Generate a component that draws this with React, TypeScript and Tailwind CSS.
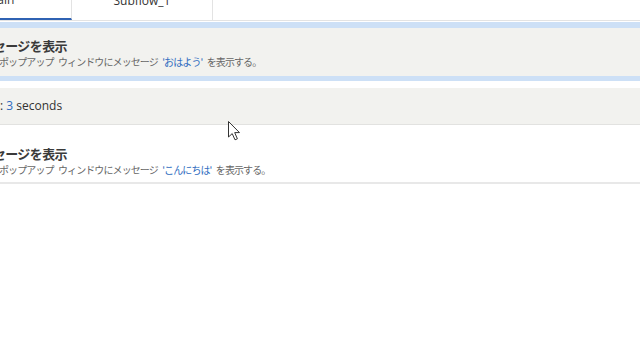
import React from "react";

const jp = { fontFamily: '"Noto Sans CJK JP", "Noto Sans", sans-serif' };
const lat = { fontFamily: '"Open Sans", "Noto Sans CJK JP", sans-serif' };

function Cursor() {
  return (
    <svg
      className="absolute left-[228px] top-[121px]"
      width="13"
      height="20"
      viewBox="0 0 13 20"
    >
      <path
        d="M0.5 0.5 L0.5 16 L4.2 12.6 L7 18.8 L9.4 17.8 L6.7 11.6 L11.5 11.6 Z"
        fill="#ffffff"
        stroke="#333333"
        strokeWidth="1"
        strokeLinejoin="round"
      />
    </svg>
  );
}

function Sub({ word }: { word: string }) {
  return (
    <div
      className="-ml-[1px] text-[10px] leading-[16px] text-[#666] tracking-[-0.9px] [word-spacing:3px] whitespace-nowrap"
      style={jp}
    >
      ポップアップ ウィンドウにメッセージ <span className="text-[#2f6cc0]">'{word}'</span> を表示する。
    </div>
  );
}

function Title() {
  return (
    <div
      className="-ml-[32px] text-[13px] leading-[17px] font-bold text-[#3a3a3a] tracking-[-0.6px]"
      style={jp}
    >
      メッセージを表示
    </div>
  );
}

export default function App() {
  return (
    <div className="relative w-[640px] h-[360px] overflow-hidden bg-white">
      {/* Tabs */}
      <div className="flex h-[39px] -mt-[18px] border-b border-[#e3e3e3]">
        <div className="-ml-[70px] w-[142px] flex items-center justify-center border-b-2 border-[#2f62b3] border-r border-r-[#e3e3e3]">
          <span className="text-[12px] text-[#333]" style={lat}>Main</span>
        </div>
        <div className="w-[141px] flex items-center justify-center border-r border-[#e3e3e3]">
          <span className="text-[12px] text-[#333]" style={lat}>Subflow_1</span>
        </div>
      </div>

      {/* Selected action */}
      <div className="mt-[1px] h-[59px] border-t-[6px] border-b-[5px] border-[#cde0f6] bg-[#f2f2ef] flex flex-col pt-[9px]">
        <Title />
        <Sub word="おはよう" />
      </div>

      {/* Wait row */}
      <div className="mt-[7px] h-[37px] bg-[#f2f2ef] border-b border-[#e2e2e0] flex items-center">
        <span className="text-[12px] text-[#333] whitespace-nowrap" style={lat}>
          : <span className="text-[#2f6cc0]">3</span> seconds
        </span>
      </div>

      {/* Second action */}
      <div className="h-[59px] border-b-2 border-[#e8e8e8] bg-white flex flex-col pt-[20px]">
        <Title />
        <Sub word="こんにちは" />
      </div>

      <Cursor />
    </div>
  );
}
